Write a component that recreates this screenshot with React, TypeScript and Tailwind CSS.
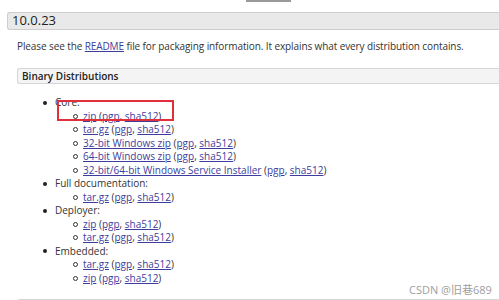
import React from 'react';

type Link = { label: string; sigs?: boolean };

const groups: { name: string; items: Link[] }[] = [
  {
    name: 'Core:',
    items: [
      { label: 'zip', sigs: true },
      { label: 'tar.gz', sigs: true },
      { label: '32-bit Windows zip', sigs: true },
      { label: '64-bit Windows zip', sigs: true },
      { label: '32-bit/64-bit Windows Service Installer', sigs: true },
    ],
  },
  { name: 'Full documentation:', items: [{ label: 'tar.gz', sigs: true }] },
  {
    name: 'Deployer:',
    items: [
      { label: 'zip', sigs: true },
      { label: 'tar.gz', sigs: true },
    ],
  },
  {
    name: 'Embedded:',
    items: [
      { label: 'tar.gz', sigs: true },
      { label: 'zip', sigs: true },
    ],
  },
];

function A({ children }: { children: React.ReactNode }) {
  return <a className="text-[#3d3d9e] underline underline-offset-1">{children}</a>;
}

function Item({ item }: { item: Link }) {
  return (
    <li className="flex items-center">
      <span className="mr-[5px] h-[5px] w-[5px] shrink-0 rounded-full border border-[#333]" />
      <span>
        <A>{item.label}</A>
        {item.sigs && (
          <>
            {' ('}
            <A>pgp</A>, <A>sha512</A>)
          </>
        )}
      </span>
    </li>
  );
}

export default function App() {
  return (
    <div
      className="relative h-[300px] w-[499px] overflow-hidden bg-white text-[#333]"
      style={{ fontFamily: '"Open Sans", "Noto Sans CJK SC", sans-serif' }}
    >
      <div className="ml-[246px] h-[2px] w-[45px] bg-[#9a9a9a]" />

      <div className="ml-[7px] mt-[10px] flex h-[18px] items-center rounded-l-[3px] border border-r-0 border-[#cdcdcd] bg-[#e9e9e9] pl-[4px] text-[13px] text-[#222]">
        10.0.23
      </div>

      <p className="ml-[17px] mt-[9px] text-[10px] leading-[14px] tracking-[-0.1px]">
        Please see the <A>README</A> file for packaging information. It explains what every distribution contains.
      </p>

      <div className="ml-[17px] mt-[15px] flex h-[16px] items-center rounded-l-[3px] border border-r-0 border-[#d6d6d6] bg-[#f4f4f4] pl-[4px] text-[10px] font-semibold text-[#222]">
        Binary Distributions
      </div>

      <ul className="ml-[43px] mt-[12px] text-[10px] leading-[13.5px]">
        {groups.map((g) => (
          <li key={g.name}>
            <div className="flex items-center">
              <span className="mr-[8px] h-[4px] w-[4px] shrink-0 rounded-full bg-[#222]" />
              {g.name}
            </div>
            <ul className="ml-[30px]">
              {g.items.map((it, i) => (
                <Item key={i} item={it} />
              ))}
            </ul>
          </li>
        ))}
      </ul>

      <div className="ml-[17px] mt-[14px] h-[20px] rounded-l-[3px] border border-r-0 border-[#d6d6d6] bg-[#f4f4f4]" />

      {/* annotation box */}
      <div className="absolute left-[57px] top-[100px] h-[21px] w-[117px] border-2 border-[#e0303a]" />

      {/* watermark */}
      <div className="absolute left-[409px] top-[282px] text-[11px] text-[#a0a0a0]">CSDN @旧巷689</div>
    </div>
  );
}
